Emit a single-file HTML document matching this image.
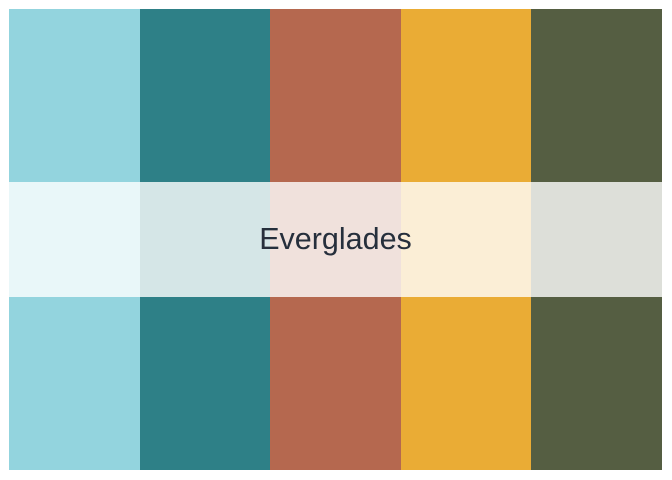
<html><body style="margin:0;width:672px;height:480px;background:#fff;position:relative;overflow:hidden">
<div style="position:absolute;left:9px;top:9px;width:653px;height:461px;display:flex">
<div style="width:131px;background:#93D4DE"></div>
<div style="width:130px;background:#2E8087"></div>
<div style="width:131px;background:#B5684F"></div>
<div style="width:130px;background:#EAAC35"></div>
<div style="width:131px;background:#555E42"></div>
</div>
<div style="position:absolute;left:9px;top:182px;width:653px;height:115px;background:rgba(255,255,255,0.8)"></div>
<div style="position:absolute;left:9px;width:653px;top:222px;text-align:center;font:30.5px 'Liberation Sans',sans-serif;color:#262f3c">Everglades</div>
</body></html>
